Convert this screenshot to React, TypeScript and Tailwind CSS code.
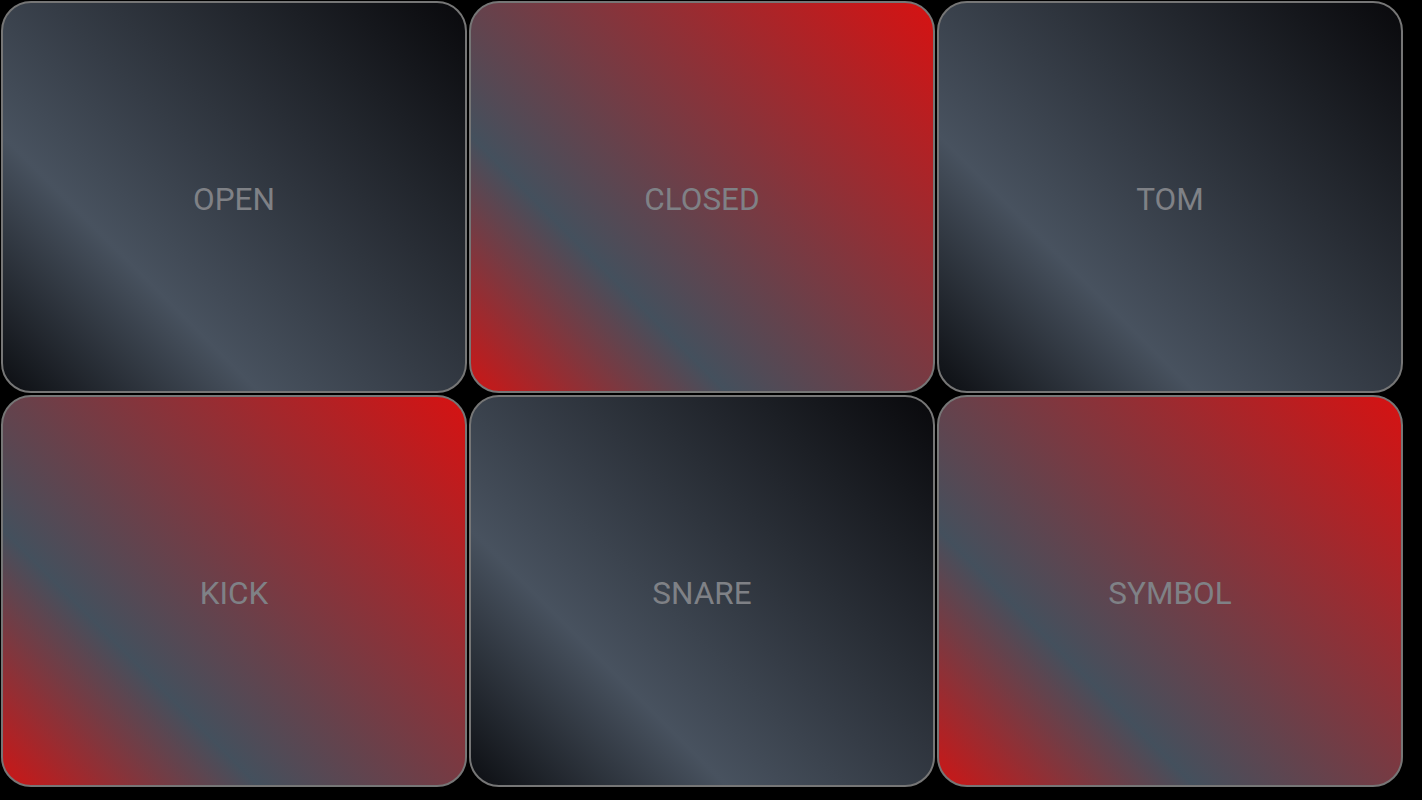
const pads = [
  { label: 'OPEN', tone: 'dark' },
  { label: 'CLOSED', tone: 'red' },
  { label: 'TOM', tone: 'dark' },
  { label: 'KICK', tone: 'red' },
  { label: 'SNARE', tone: 'dark' },
  { label: 'SYMBOL', tone: 'red' },
] as const;

function Pad({ label, tone }: { label: string; tone: 'dark' | 'red' }) {
  const bg =
    tone === 'red'
      ? 'bg-[linear-gradient(45deg,#cc1616_0%,#44505d_30%,#d61212_100%)]'
      : 'bg-[linear-gradient(45deg,#0c0e12_0%,#48525f_30%,#09090c_100%)]';

  return (
    <div className="p-px">
      <button
        type="button"
        className={`flex h-full w-full items-center justify-center rounded-[30px] border-2 border-[#767676] pt-[5px] ${bg}`}
      >
        <span className="text-[31.5px] leading-none text-[#7f8186] font-['Roboto',sans-serif]">
          {label}
        </span>
      </button>
    </div>
  );
}

export default function App() {
  return (
    <div className="h-[800px] w-[1422px] overflow-hidden bg-black">
      <div className="grid h-[788px] w-[1404px] grid-cols-3 grid-rows-2">
        {pads.map((pad) => (
          <Pad key={pad.label} label={pad.label} tone={pad.tone} />
        ))}
      </div>
    </div>
  );
}
